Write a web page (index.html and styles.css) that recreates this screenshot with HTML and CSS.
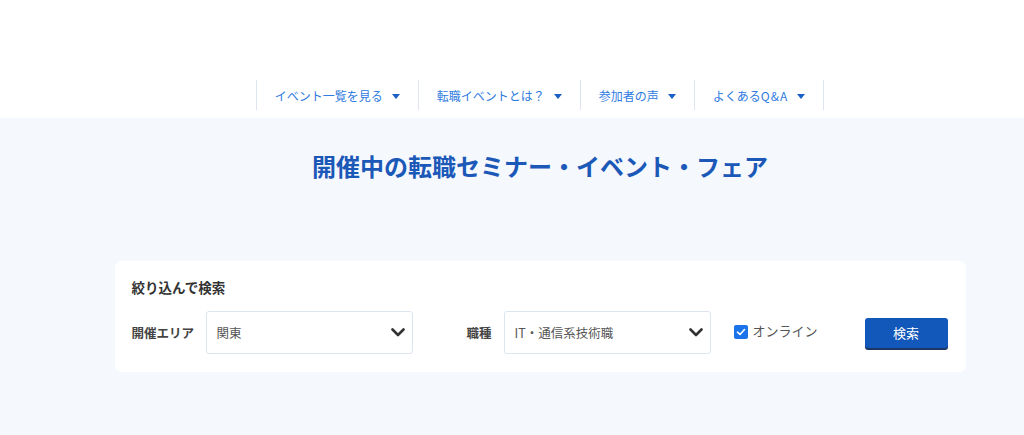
FILE: index.html
```html
<!DOCTYPE html>
<html lang="ja">
<head>
<meta charset="utf-8">
<title>開催中の転職セミナー・イベント・フェア</title>
<link rel="stylesheet" href="styles.css">
</head>
<body>
<div class="page">
  <header class="header"></header>
  <nav class="nav">
    <ul class="nav-list">
      <li class="nav-item"><span>イベント一覧を見る</span><i class="tri"></i></li>
      <li class="nav-item"><span>転職イベントとは？</span><i class="tri"></i></li>
      <li class="nav-item"><span>参加者の声</span><i class="tri"></i></li>
      <li class="nav-item"><span>よくある<span class="qa">Q&amp;A</span></span><i class="tri"></i></li>
    </ul>
  </nav>
  <main class="main">
    <h1 class="title">開催中の転職セミナー・イベント・フェア</h1>
    <section class="card">
      <h2 class="card-title">絞り込んで検索</h2>
      <div class="row">
        <label class="label label-area">開催エリア</label>
        <div class="select"><span>関東</span>
          <svg class="chev" width="14" height="9" viewBox="0 0 14 9"><polyline points="1.5,1.5 7,7 12.5,1.5" fill="none" stroke="#333" stroke-width="2.6" stroke-linecap="round" stroke-linejoin="round"/></svg>
        </div>
        <label class="label label-job">職種</label>
        <div class="select"><span>IT・通信系技術職</span>
          <svg class="chev" width="14" height="9" viewBox="0 0 14 9"><polyline points="1.5,1.5 7,7 12.5,1.5" fill="none" stroke="#333" stroke-width="2.6" stroke-linecap="round" stroke-linejoin="round"/></svg>
        </div>
        <div class="check">
          <span class="box"><svg width="14" height="14" viewBox="0 0 14 14"><polyline points="3.5,7.2 6,9.5 10.5,4.5" fill="none" stroke="#fff" stroke-width="1.6" stroke-linecap="round" stroke-linejoin="round"/></svg></span>
          <span class="check-text">オンライン</span>
        </div>
        <button class="btn">検索</button>
      </div>
    </section>
  </main>
</div>
</body>
</html>
```
FILE: styles.css
```css
html, body {
  margin: 0;
  padding: 0;
  background: #f5f8fd;
}
body {
  font-family: "Noto Sans CJK JP", "Noto Sans", sans-serif;
  color: #333;
}
.page {
  width: 1024px;
  height: 435px;
  box-sizing: border-box;
  padding-left: 56px;
  background: linear-gradient(#fff 0, #fff 118px, #f5f8fd 118px);
}
.header {
  height: 78px;
}
.nav {
  height: 40px;
  display: flex;
  justify-content: center;
}
.nav-list {
  list-style: none;
  margin: 0;
  padding: 2px 0 0;
  display: flex;
  align-items: flex-start;
}
.nav-item {
  height: 30px;
  display: flex;
  align-items: center;
  padding: 0 18px;
  border-left: 1px solid #dfe5ef;
  font-size: 12px;
  color: #2f7be0;
  white-space: nowrap;
}
.nav-item:last-child {
  border-right: 1px solid #dfe5ef;
}
.qa {
  letter-spacing: 1px;
}
.tri {
  display: inline-block;
  width: 0;
  height: 0;
  margin-left: 9px;
  margin-top: 2px;
  border-left: 4px solid transparent;
  border-right: 4px solid transparent;
  border-top: 5px solid #1a5fc4;
}
.main {
  padding-top: 33px;
}
.title {
  margin: 0;
  text-align: center;
  font-size: 24px;
  line-height: 30px;
  font-weight: 700;
  color: #1b58b8;
}
.card {
  width: 851px;
  margin: 80px auto 0;
  background: #fff;
  border-radius: 7px;
  padding: 16px 18px 18px 17px;
  box-sizing: border-box;
}
.card-title {
  margin: 0 0 14px;
  font-size: 13.5px;
  line-height: 20px;
  font-weight: 700;
  color: #333;
}
.row {
  display: flex;
  align-items: center;
}
.label {
  font-size: 12.5px;
  font-weight: 700;
  color: #444;
  white-space: nowrap;
}
.label-area {
  width: 74px;
}
.label-job {
  width: 37px;
  margin-left: 54px;
}
.select {
  width: 207px;
  height: 43px;
  box-sizing: border-box;
  border: 1px solid #dde5f0;
  border-radius: 3px;
  display: flex;
  align-items: center;
  justify-content: space-between;
  padding: 0 7px 0 10px;
  font-size: 12.5px;
  color: #555;
}
.chev {
  display: block;
}
.check {
  display: flex;
  align-items: center;
  margin-left: 23px;
  margin-top: -2px;
}
.box {
  width: 14px;
  height: 14px;
  border-radius: 2px;
  background: #1a73e8;
  display: block;
}
.box svg {
  display: block;
}
.check-text {
  margin-left: 5px;
  font-size: 13px;
  color: #555;
  margin-top: -3px;
}
.btn {
  margin-left: auto;
  width: 83px;
  height: 30px;
  border: 0;
  border-radius: 3px;
  background: #1257ba;
  box-shadow: 0 2px 0 #1e3663;
  color: #fff;
  font-family: inherit;
  font-size: 13px;
  margin-top: 2px;
  margin-bottom: 2px;
}
```
